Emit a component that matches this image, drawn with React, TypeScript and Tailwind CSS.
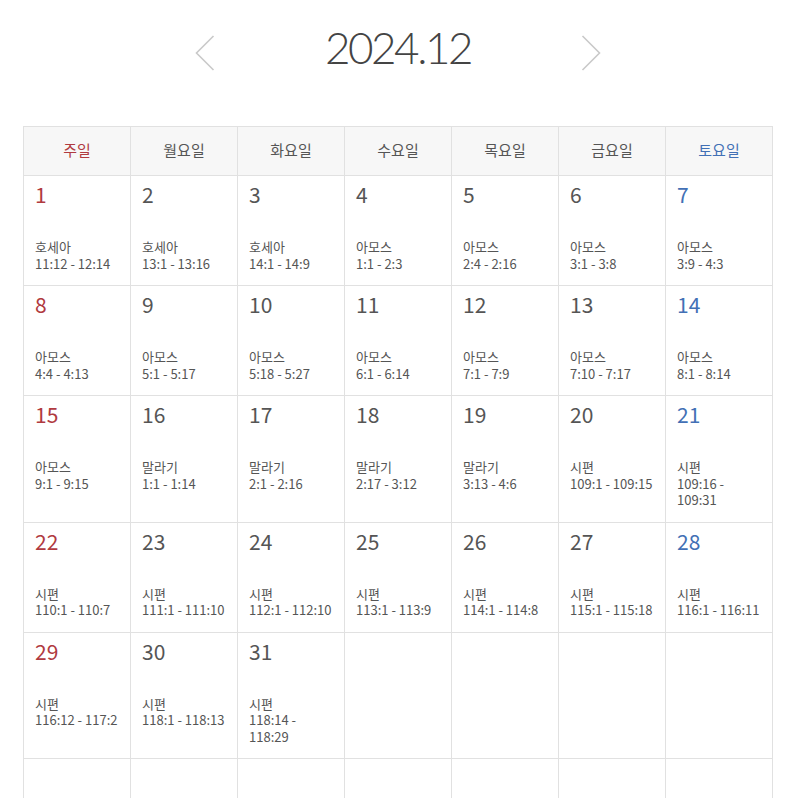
import React from 'react'

type Day = { day: number; book: string; range: string }

const weekdays = ['주일', '월요일', '화요일', '수요일', '목요일', '금요일', '토요일']

const readings: [string, string][] = [
  ['호세아', '11:12 - 12:14'],
  ['호세아', '13:1 - 13:16'],
  ['호세아', '14:1 - 14:9'],
  ['아모스', '1:1 - 2:3'],
  ['아모스', '2:4 - 2:16'],
  ['아모스', '3:1 - 3:8'],
  ['아모스', '3:9 - 4:3'],
  ['아모스', '4:4 - 4:13'],
  ['아모스', '5:1 - 5:17'],
  ['아모스', '5:18 - 5:27'],
  ['아모스', '6:1 - 6:14'],
  ['아모스', '7:1 - 7:9'],
  ['아모스', '7:10 - 7:17'],
  ['아모스', '8:1 - 8:14'],
  ['아모스', '9:1 - 9:15'],
  ['말라기', '1:1 - 1:14'],
  ['말라기', '2:1 - 2:16'],
  ['말라기', '2:17 - 3:12'],
  ['말라기', '3:13 - 4:6'],
  ['시편', '109:1 - 109:15'],
  ['시편', '109:16 - 109:31'],
  ['시편', '110:1 - 110:7'],
  ['시편', '111:1 - 111:10'],
  ['시편', '112:1 - 112:10'],
  ['시편', '113:1 - 113:9'],
  ['시편', '114:1 - 114:8'],
  ['시편', '115:1 - 115:18'],
  ['시편', '116:1 - 116:11'],
  ['시편', '116:12 - 117:2'],
  ['시편', '118:1 - 118:13'],
  ['시편', '118:14 - 118:29']
]

const days: (Day | null)[] = [
  ...readings.map(([book, range], i) => ({ day: i + 1, book, range })),
  ...Array(11).fill(null)
]

const font = { fontFamily: '"Noto Sans CJK KR", "Noto Sans", sans-serif' }
const titleFont = { fontFamily: 'Lato, "Open Sans", sans-serif' }

function Chevron({ dir }: { dir: 'left' | 'right' }) {
  return (
    <svg width="20" height="36" viewBox="0 0 20 36" className="mt-[10px] shrink-0">
      <polyline
        points={dir === 'left' ? '18.5,1 1.5,18 18.5,35' : '1.5,1 18.5,18 1.5,35'}
        fill="none"
        stroke="#c9c9c9"
        strokeWidth="1.6"
      />
    </svg>
  )
}

function dayColor(col: number) {
  if (col === 0) return 'text-[#b03a40]'
  if (col === 6) return 'text-[#4270b5]'
  return 'text-[#555]'
}

export default function App() {
  return (
    <div className="min-h-screen bg-white" style={font}>
      <div className="ml-[23px] w-[750px] pt-[25px]">
        <div className="flex h-[44px] items-start justify-center">
          <Chevron dir="left" />
          <div className="w-[366px] text-center text-[44px] leading-[44px] font-light tracking-[-2.5px] text-[#444]" style={titleFont}>2024.12</div>
          <Chevron dir="right" />
        </div>

        <div className="mt-[57px] grid grid-cols-7 border-l border-t border-[#e1e1e1]">
          {weekdays.map((w, i) => (
            <div key={w} className={`flex h-[49px] items-center justify-center border-b border-r border-[#e1e1e1] bg-[#f7f7f7] pb-[2px] text-[15px] ${dayColor(i)}`}>
              {w}
            </div>
          ))}
          {days.map((d, i) => (
            <div key={i} className="min-h-[110px] border-b border-r border-[#e1e1e1] pb-[13px] pl-[11px] pr-[11px] pt-[7px]">
              {d && (
                <>
                  <div className={`text-[21px] leading-[22px] ${dayColor(i % 7)}`}>{d.day}</div>
                  <div className="mt-[34px] text-[13px] leading-[16.5px] text-[#555]">
                    <div>{d.book}</div>
                    <div>{d.range}</div>
                  </div>
                </>
              )}
            </div>
          ))}
        </div>
      </div>
    </div>
  )
}
